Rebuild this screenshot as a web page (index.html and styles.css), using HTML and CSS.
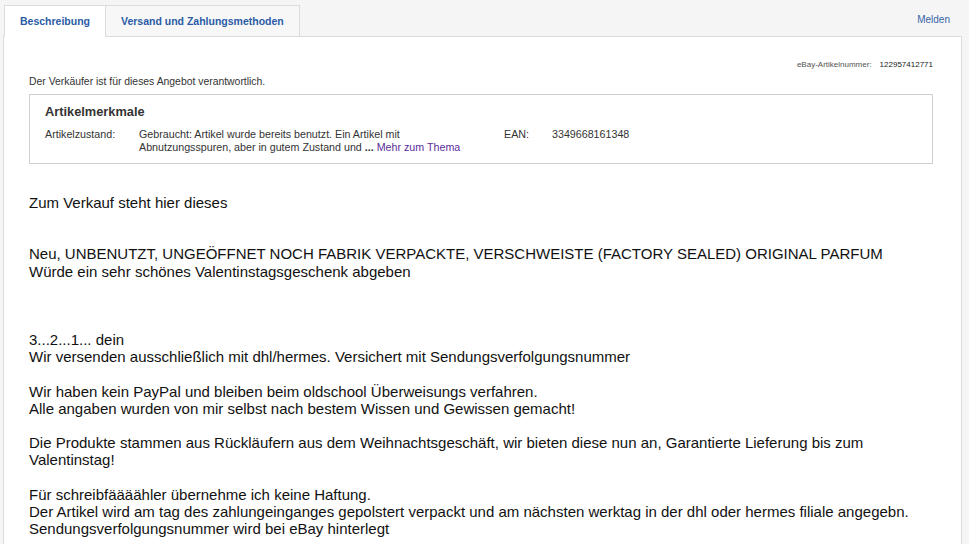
FILE: index.html
```html
<!DOCTYPE html>
<html>
   <head>
      <meta charset="utf-8">
      <title>Beschreibung</title>
      <link rel="stylesheet" href="styles.css">
   </head>
   <body>
        <div class="tabs-row">
            <div class="tab active">Beschreibung</div>
            <div class="tab">Versand und Zahlungsmethoden</div>
            <a class="report" href="#">Melden</a>
        </div>

        <div class="panel">
            <div class="item-num">eBay-Artikelnummer:<span>122957412771</span></div>
            <div class="seller-note">Der Verkäufer ist für dieses Angebot verantwortlich.</div>

            <div class="specs">
                <div class="specs-title">Artikelmerkmale</div>
                <div class="specs-row">
                    <div class="spec-label">Artikelzustand:</div>
                    <div class="spec-value">Gebraucht: Artikel wurde bereits benutzt. Ein Artikel mit<br>Abnutzungsspuren, aber in gutem Zustand und <b>...</b> <a href="#">Mehr zum Thema</a></div>
                    <div class="spec-label">EAN:</div>
                    <div class="spec-value">3349668161348</div>
                </div>
            </div>

            <div class="desc">
                Zum Verkauf steht hier dieses<br>
                <br>
                <br>
                Neu, UNBENUTZT, UNGEÖFFNET NOCH FABRIK VERPACKTE, VERSCHWEISTE (FACTORY SEALED) ORIGINAL PARFUM<br>
                Würde ein sehr schönes Valentinstagsgeschenk abgeben<br>
                <br>
                <br>
                <br>
                3...2...1... dein<br>
                Wir versenden ausschließlich mit dhl/hermes. Versichert mit Sendungsverfolgungsnummer<br>
                <br>
                Wir haben kein PayPal und bleiben beim oldschool Überweisungs verfahren.<br>
                Alle angaben wurden von mir selbst nach bestem Wissen und Gewissen gemacht!<br>
                <br>
                Die Produkte stammen aus Rückläufern aus dem Weihnachtsgeschäft, wir bieten diese nun an, Garantierte Lieferung bis zum Valentinstag!<br>
                <br>
                Für schreibfäääähler übernehme ich keine Haftung.<br>
                Der Artikel wird am tag des zahlungeinganges gepolstert verpackt und am nächsten werktag in der dhl oder hermes filiale angegebn.<br>
                Sendungsverfolgungsnummer wird bei eBay hinterlegt
            </div>
        </div>
   </body>
</html>
```

FILE: styles.css
```css
body {
    background: #f5f5f5;
    font-family: "Liberation Sans", Arial, sans-serif;
    color: #333;
    margin: 0;
    padding: 0;
}
.tabs-row {
    display: flex;
    align-items: flex-end;
    padding: 5px 7px 0 4px;
    position: relative;
    z-index: 1;
}
.tab {
    height: 30px;
    line-height: 30px;
    padding: 0 15px;
    border: 1px solid #dcdcdc;
    border-bottom: none;
    background: #f7f7f7;
    color: #2b5ca6;
    font-size: 10.5px;
    font-weight: bold;
}
.tab.active {
    background: #fff;
    height: 31px;
    margin-bottom: -1px;
}
.tab + .tab {
    border-left: none;
}
.report {
    margin-left: auto;
    align-self: flex-start;
    margin-top: 9px;
    margin-right: 12px;
    color: #3565a9;
    font-size: 10px;
    text-decoration: none;
}
.panel {
    background: #fff;
    border: 1px solid #dcdcdc;
    margin: 0 7px 0 3px;
    padding: 23px 28px 20px 25px;
}
.item-num {
    text-align: right;
    font-size: 8px;
    color: #555;
}
.item-num span {
    color: #222;
    margin-left: 8px;
}
.seller-note {
    font-size: 10.4px;
    color: #333;
    margin-top: 7px;
}
.specs {
    border: 1px solid #cfcfcf;
    margin-top: 7px;
    padding: 9px 15px 9px;
}
.specs-title {
    font-size: 12.8px;
    font-weight: bold;
    color: #333;
}
.specs-row {
    display: grid;
    grid-template-columns: 94px 365px 48px auto;
    margin-top: 9px;
    font-size: 10.7px;
    line-height: 13px;
    color: #333;
}
.spec-value a {
    color: #5b2d9a;
    text-decoration: none;
}
.desc {
    margin-top: 30px;
    font-size: 15px;
    line-height: 17.15px;
    color: #111;
}
```
